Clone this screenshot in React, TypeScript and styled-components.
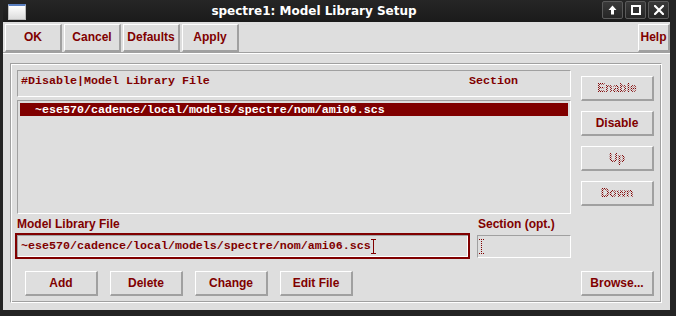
import styled, { createGlobalStyle, css } from 'styled-components';

const RED = '#800000';
const FACE = '#dedede';
const SHADE = '#a0a0a0';
const SANS = '"Liberation Sans", Arial, sans-serif';
const MONO = '"Liberation Mono", "DejaVu Sans Mono", monospace';

const GlobalStyle = createGlobalStyle`
  html, body {
    margin: 0;
    padding: 0;
    background: #1e1e1e;
  }
  #root {
    width: 676px;
    height: 316px;
  }
`;

/* marco de la ventana */
const Window = styled.div`
  width: 676px;
  height: 316px;
  box-sizing: border-box;
  padding: 0 6px 6px 3px;
  background: #242424;
  display: flex;
  flex-direction: column;
`;

const TitleBar = styled.div`
  height: 22px;
  flex-shrink: 0;
  display: flex;
  align-items: center;
  padding: 0 1px 0 5px;
  background: linear-gradient(#262626, #1b1b1b);
`;

const WinIcon = styled.div`
  width: 16px;
  height: 13px;
  border: 1px solid #bdbdbd;
  border-top: 2px solid #5a7fc0;
  background: linear-gradient(#ffffff, #dcdcdc);
  margin-top: 1px;
`;

const Title = styled.div`
  flex: 1;
  text-align: center;
  color: #ffffff;
  font-family: "DejaVu Sans", sans-serif;
  font-weight: bold;
  font-size: 12px;
  line-height: 22px;
`;

const WinButtons = styled.div`
  display: flex;
  gap: 2px;
  align-self: flex-start;
  margin-top: 1px;
`;

const WinButton = styled.div`
  width: 21px;
  height: 18px;
  box-sizing: border-box;
  border: 1px solid #5a5a5a;
  border-radius: 2px;
  background: linear-gradient(#3a3a3a, #262626);
  display: flex;
  align-items: center;
  justify-content: center;
`;

const Content = styled.div`
  flex: 1;
  background: ${FACE};
  display: flex;
  flex-direction: column;
`;

const Toolbar = styled.div`
  height: 31px;
  box-sizing: border-box;
  flex-shrink: 0;
  display: flex;
  gap: 2px;
  padding: 2px 0 0 2px;
  border-bottom: 1px solid ${SHADE};
  box-shadow: 0 1px 0 #ffffff;
`;

const Button = styled.button<{ $w: number; $h?: number; $push?: boolean }>`
  width: ${p => p.$w}px;
  height: ${p => p.$h ?? 25}px;
  box-sizing: border-box;
  margin: 0;
  ${p => p.$push && 'margin-left: auto;'}
  padding: 0 0 1px;
  background: ${FACE};
  border-style: solid;
  border-width: 1px 2px 2px 1px;
  border-color: #ffffff ${SHADE} ${SHADE} #ffffff;
  border-radius: 0;
  color: ${RED};
  font-family: ${SANS};
  font-weight: bold;
  font-size: 12px;
  line-height: 14px;
  cursor: default;
  display: flex;
  align-items: center;
  justify-content: center;
`;

/* texto punteado de los botones desactivados */
const Caption = styled.span<{ $stipple?: boolean }>`
  ${p => p.$stipple && css`
    color: transparent;
    background-image: repeating-conic-gradient(${RED} 0 25%, transparent 0 50%);
    background-size: 2px 2px;
    -webkit-background-clip: text;
    background-clip: text;
  `}
`;

const Group = styled.div`
  margin: 10px 8px 7px 7px;
  border: 1px solid;
  border-color: ${SHADE} #ffffff #ffffff ${SHADE};
  box-shadow: inset 1px 1px 0 #ffffff, inset -1px -1px 0 ${SHADE};
  padding: 6px 7px 6px 6px;
  display: flex;
  flex-direction: column;
`;

const TopRow = styled.div`
  display: flex;
  gap: 10px;
`;

const ListArea = styled.div`
  width: 554px;
  display: flex;
  flex-direction: column;
  gap: 3px;
`;

const sunken = css`
  box-sizing: border-box;
  border: 1px solid;
  border-color: ${SHADE} #ffffff #ffffff ${SHADE};
`;

const ListHeader = styled.div`
  ${sunken};
  height: 27px;
  padding: 3px 0 0 3px;
  display: grid;
  grid-template-columns: 448px 1fr;
  color: ${RED};
  font-family: ${MONO};
  font-weight: bold;
  font-size: 11.67px;
  line-height: 15px;
  white-space: pre;
`;

const ListBox = styled.div`
  ${sunken};
  height: 114px;
  padding: 2px 2px 0;
`;

const Row = styled.div<{ $selected?: boolean }>`
  height: 13px;
  padding-left: 1px;
  background: ${p => (p.$selected ? RED : 'transparent')};
  color: ${p => (p.$selected ? '#ffffff' : RED)};
  font-family: ${MONO};
  font-weight: bold;
  font-size: 11.67px;
  line-height: 14px;
  white-space: pre;
`;

const SideColumn = styled.div`
  width: 73px;
  padding-top: 6px;
  display: flex;
  flex-direction: column;
  gap: 10px;
`;

const FieldGrid = styled.div`
  margin: 1px 0 0 -2px;
  display: grid;
  grid-template-columns: 455px 94px;
  grid-template-rows: 18px 26px;
  column-gap: 7px;
`;

const FieldLabel = styled.div<{ $indent: number }>`
  padding: 1px 0 0 ${p => p.$indent}px;
  color: ${RED};
  font-family: ${SANS};
  font-weight: bold;
  font-size: 12px;
  line-height: 16px;
`;

const FileInput = styled.div`
  box-sizing: border-box;
  height: 26px;
  border: 2px solid ${RED};
  box-shadow: inset 1px 1px 0 ${SHADE}, inset -1px -1px 0 #ffffff;
  padding: 0 0 0 4px;
  display: flex;
  align-items: center;
  color: ${RED};
  font-family: ${MONO};
  font-weight: bold;
  font-size: 11.67px;
  white-space: pre;
`;

const SectionInput = styled.div`
  ${sunken};
  height: 23px;
  margin-top: 2px;
  padding-left: 1px;
  display: flex;
  align-items: center;
`;

const BottomRow = styled.div`
  margin-top: 12px;
  padding-left: 8px;
  display: flex;
  gap: 12px;
`;

const Cursor = ({ dotted }: { dotted?: boolean }) => (
  <svg width="5" height="15" viewBox="0 0 5 15" style={{ flexShrink: 0 }}>
    <path
      d="M0 0.5H5M2.5 0V15M0 14.5H5"
      stroke={RED}
      strokeWidth="1"
      strokeDasharray={dotted ? '1 1' : undefined}
      fill="none"
    />
  </svg>
);

const filePath = '~ese570/cadence/local/models/spectre/nom/ami06.scs';

export default function App() {
  return (
    <>
      <GlobalStyle />
      <Window>
        <TitleBar>
          <WinIcon />
          <Title>spectre1: Model Library Setup</Title>
          <WinButtons>
            <WinButton>
              <svg width="9" height="10" viewBox="0 0 9 10">
                <path d="M4.5 0.5L8.5 5H6V9.5H3V5H0.5Z" fill="#ffffff" />
              </svg>
            </WinButton>
            <WinButton>
              <svg width="10" height="10" viewBox="0 0 10 10">
                <rect x="1" y="1" width="8" height="8" fill="none" stroke="#ffffff" strokeWidth="2" />
              </svg>
            </WinButton>
            <WinButton>
              <svg width="10" height="10" viewBox="0 0 10 10">
                <path d="M1 1L9 9M9 1L1 9" stroke="#ffffff" strokeWidth="2.2" strokeLinecap="square" />
              </svg>
            </WinButton>
          </WinButtons>
        </TitleBar>

        <Content>
          <Toolbar>
            <Button $w={57} $h={28}>OK</Button>
            <Button $w={57} $h={28}>Cancel</Button>
            <Button $w={57} $h={28}>Defaults</Button>
            <Button $w={57} $h={28}>Apply</Button>
            <Button $w={32} $h={28} $push>Help</Button>
          </Toolbar>

          <Group>
            <TopRow>
              <ListArea>
                <ListHeader>
                  <span>#Disable|Model Library File</span>
                  <span>Section</span>
                </ListHeader>
                <ListBox>
                  <Row $selected>{'  ' + filePath}</Row>
                </ListBox>
              </ListArea>
              <SideColumn>
                <Button $w={73}><Caption $stipple>Enable</Caption></Button>
                <Button $w={73}><Caption>Disable</Caption></Button>
                <Button $w={73}><Caption $stipple>Up</Caption></Button>
                <Button $w={73}><Caption $stipple>Down</Caption></Button>
              </SideColumn>
            </TopRow>

            <FieldGrid>
              <FieldLabel $indent={2}>Model Library File</FieldLabel>
              <FieldLabel $indent={1}>Section (opt.)</FieldLabel>
              <FileInput>
                {filePath}
                <Cursor />
              </FileInput>
              <SectionInput>
                <Cursor dotted />
              </SectionInput>
            </FieldGrid>

            <BottomRow>
              <Button $w={73}>Add</Button>
              <Button $w={73}>Delete</Button>
              <Button $w={73}>Change</Button>
              <Button $w={73}>Edit File</Button>
              <Button $w={73} $push>Browse...</Button>
            </BottomRow>
          </Group>
        </Content>
      </Window>
    </>
  );
}
